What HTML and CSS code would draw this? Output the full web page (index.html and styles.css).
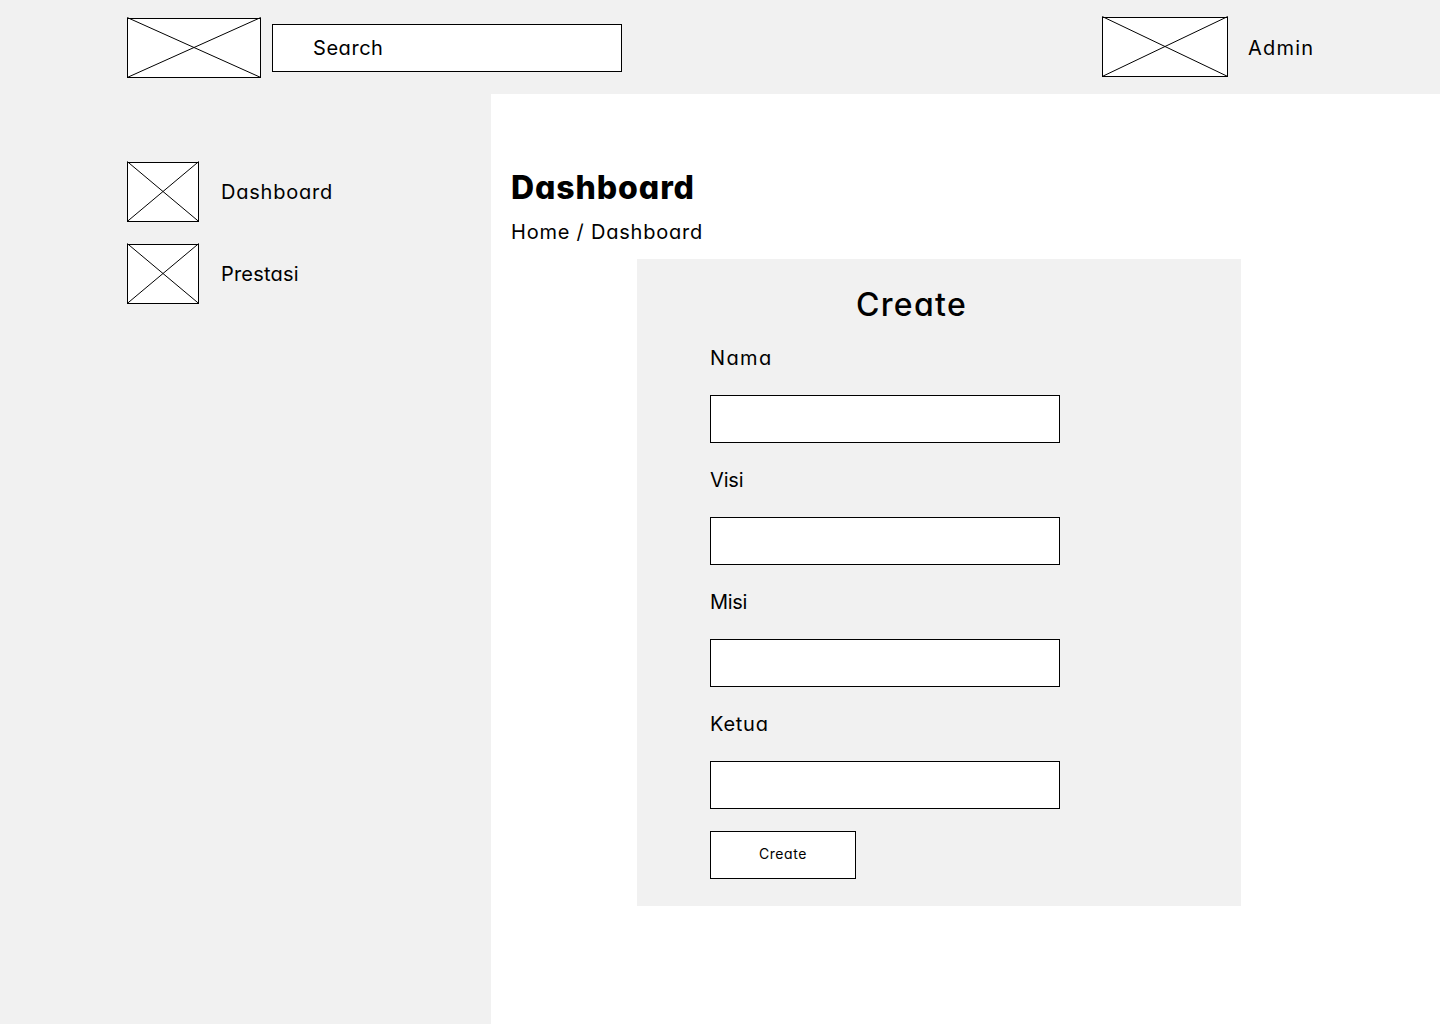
FILE: index.html
```html
<!DOCTYPE html>
<html lang="id">
<head>
<meta charset="utf-8">
<title>Dashboard</title>
<link rel="stylesheet" href="styles.css">
</head>
<body>
<header class="topbar">
  <svg class="placeholder logo" width="134" height="60" viewBox="0 0 134 60"><rect x=".5" y=".5" width="133" height="59"/><path d="M.2-.5 133.8 59.5M133.8-.5.2 59.5"/></svg>
  <div class="search"><span class="t-search">Search</span></div>
  <div class="account">
    <svg class="placeholder" width="126" height="60" viewBox="0 0 126 60"><rect x=".5" y=".5" width="125" height="59"/><path d="M.2-.5 125.8 59.5M125.8-.5.2 59.5"/></svg>
    <span class="t-admin">Admin</span>
  </div>
</header>
<div class="layout">
  <nav class="sidebar">
    <a class="nav-item"><svg class="placeholder" width="72" height="60" viewBox="0 0 72 60"><rect x=".5" y=".5" width="71" height="59"/><path d="M.2-.5 71.8 59.5M71.8-.5.2 59.5"/></svg><span class="t-dashboard">Dashboard</span></a>
    <a class="nav-item"><svg class="placeholder" width="72" height="60" viewBox="0 0 72 60"><rect x=".5" y=".5" width="71" height="59"/><path d="M.2-.5 71.8 59.5M71.8-.5.2 59.5"/></svg><span class="t-prestasi">Prestasi</span></a>
  </nav>
  <main class="content">
    <h1 class="title">Dashboard</h1>
    <p class="crumbs">Home / Dashboard</p>
    <form class="card">
      <h2 class="card-title">Create</h2>
      <div class="fields">
        <label class="label t-nama" for="nama">Nama</label>
        <input class="input" id="nama">
        <label class="label t-visi" for="visi">Visi</label>
        <input class="input" id="visi">
        <label class="label t-misi" for="misi">Misi</label>
        <input class="input" id="misi">
        <label class="label t-ketua" for="ketua">Ketua</label>
        <input class="input" id="ketua">
        <button class="button" type="button">Create</button>
      </div>
    </form>
  </main>
</div>
</body>
</html>
```
FILE: styles.css
```css
* { box-sizing: border-box; }
body {
  margin: 0;
  min-height: 1024px;
  display: flex;
  flex-direction: column;
  background: #fff;
  color: #000;
  font: 400 20px/30px Inter, "Open Sans", sans-serif;
  font-feature-settings: "cv11" 1;
}
.topbar {
  height: 94px;
  padding: 0 127px;
  display: flex;
  align-items: flex-start;
  background: #f1f1f1;
}
.placeholder { display: block; flex: none; overflow: visible; fill: #fff; stroke: #000; }
.logo { margin-top: 18px; }
.search {
  width: 350px;
  height: 48px;
  margin: 24px 0 0 11px;
  padding: 8px 40px;
  border: 1px solid #000;
  background: #fff;
}
.account {
  width: 211px;
  margin: 17px 0 0 auto;
  display: flex;
  align-items: center;
  gap: 20px;
}
.layout { flex: 1; display: flex; }
.sidebar {
  width: 491px;
  padding: 68px 0 0 127px;
  display: flex;
  flex-direction: column;
  gap: 22px;
  background: #f1f1f1;
}
.nav-item { display: flex; align-items: center; gap: 22px; }
.content { flex: 1; padding: 70px 0 0 20px; }
.title { margin: 0; font-size: 32px; line-height: 48px; font-weight: 800; letter-spacing: .9px; }
.crumbs { margin: 5px 0 12px; letter-spacing: .78px; }
.card {
  width: 604px;
  height: 647px;
  margin-left: 126px;
  padding: 22px 73px 0;
  background: #f1f1f1;
}
.card-title { margin: 0 0 14px 146px; font-size: 32px; line-height: 48px; font-weight: 500; letter-spacing: 1.3px; }
.fields { display: flex; flex-direction: column; align-items: flex-start; gap: 22px; }
.input { width: 350px; height: 48px; padding: 0 12px; border: 1px solid #000; border-radius: 0; background: #fff; font: inherit; }
.button {
  width: 146px;
  height: 48px;
  padding: 0 0 4px;
  border: 1px solid #000;
  background: #fff;
  color: #000;
  font: 400 14px/21px Inter, "Open Sans", sans-serif;
  font-feature-settings: inherit;
  letter-spacing: .6px;
}

/* Tracking tuned per word */
.t-search { letter-spacing: .55px; }
.t-admin { padding-top: 2px; letter-spacing: 1.2px; }
.t-dashboard { letter-spacing: .78px; }
.t-prestasi { letter-spacing: .2px; }
.t-nama { letter-spacing: 1.4px; }
.t-visi { letter-spacing: -.15px; }
.t-misi { letter-spacing: -.3px; }
.t-ketua { letter-spacing: .75px; }
```
